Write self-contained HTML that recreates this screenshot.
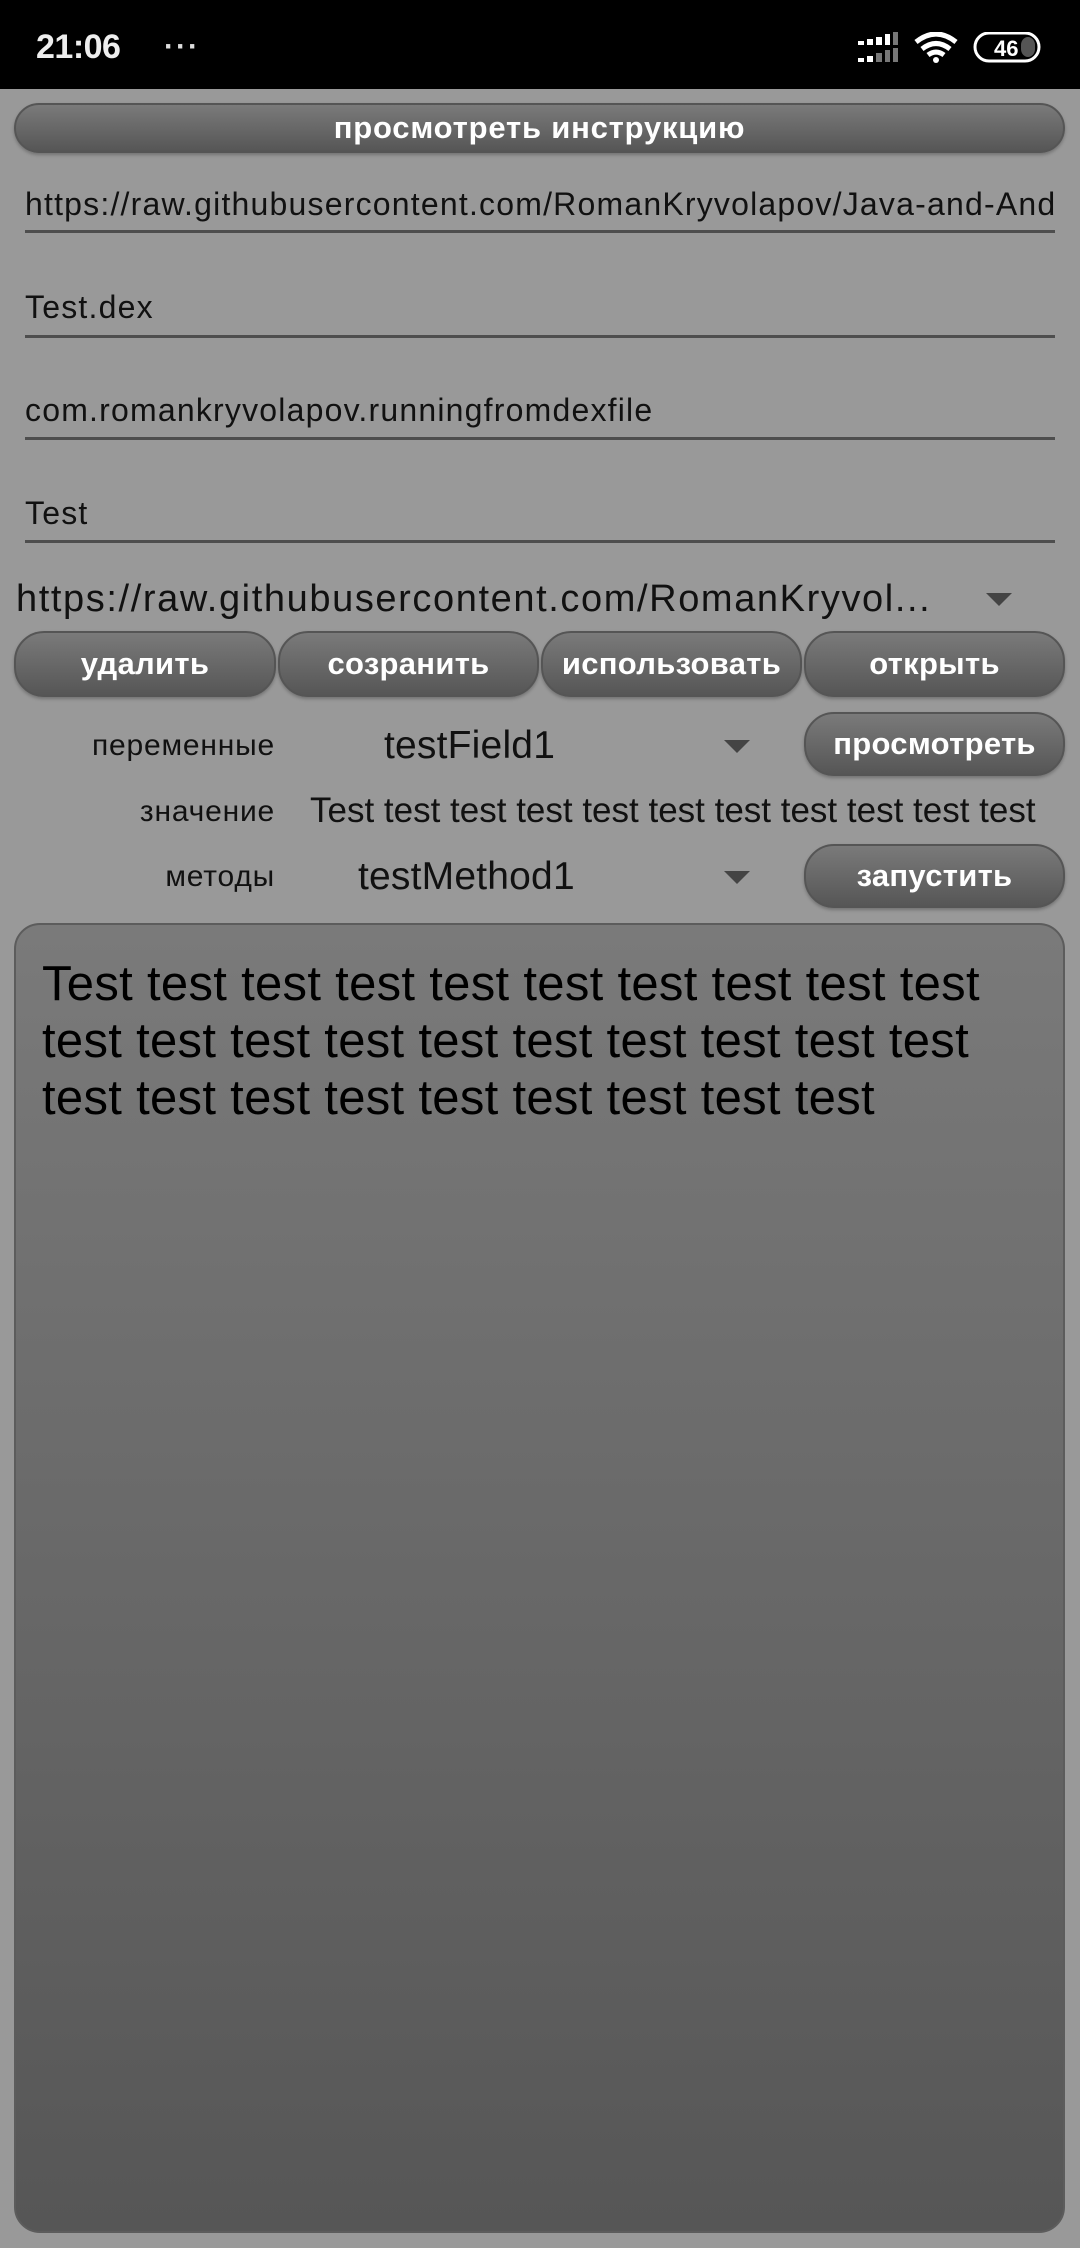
<!DOCTYPE html>
<html><head><meta charset="utf-8">
<style>
*{margin:0;padding:0;box-sizing:border-box}
body{width:1080px;height:2248px;background:#999;font-family:"Liberation Sans",sans-serif;position:relative;overflow:hidden}
.abs{position:absolute;white-space:nowrap}
.sb{left:0;top:0;width:1080px;height:89px;background:#000}
.btn{position:absolute;border:2px solid #555;background:linear-gradient(#7a7a7a,#565656);color:#fff;font-weight:bold;display:flex;align-items:center;justify-content:center;box-shadow:0 2px 3px rgba(0,0,0,.25);letter-spacing:0.3px}
.field{position:absolute;left:25px;width:1030px;font-size:32px;color:#111;overflow:hidden;white-space:nowrap;letter-spacing:1.2px}
.line{position:absolute;left:25px;width:1030px;height:3px;background:#4e4e4e}
.tri{position:absolute;width:0;height:0;border-left:13px solid transparent;border-right:13px solid transparent;border-top:13px solid #444}
.lbl{position:absolute;white-space:nowrap;right:805px;font-size:30px;color:#111;letter-spacing:0.8px}
</style></head><body>
<div class="abs sb"></div>
<div class="abs" style="left:36px;top:28px;color:#eee;font-size:34px;font-weight:bold;letter-spacing:-0.5px">21:06</div>
<div class="abs" style="left:164px;top:30px;color:#ddd;font-size:30px;font-weight:bold;letter-spacing:2px">···</div>
<svg class="abs" style="left:858px;top:32px" width="240" height="32" viewBox="0 0 240 32">
 <g fill="#fff"><rect x="0" y="9" width="6" height="4"/><rect x="9" y="7" width="6" height="6"/><rect x="18" y="5" width="6" height="8"/><rect x="27" y="2" width="5" height="11"/>
 <rect x="0" y="26" width="6" height="4"/><rect x="9" y="24" width="6" height="6"/></g>
 <g fill="#777"><rect x="35" y="0" width="5" height="13"/><rect x="18" y="21" width="6" height="9"/><rect x="27" y="18" width="5" height="12"/><rect x="35" y="16" width="5" height="14"/></g>
 <path d="M58 10 Q78 -6 98 10" stroke="#fff" stroke-width="5" fill="none"/>
 <path d="M64 17 Q78 6 92 17" stroke="#fff" stroke-width="5" fill="none"/>
 <path d="M70 23 Q78 17 86 23" stroke="#fff" stroke-width="5" fill="none"/>
 <circle cx="78" cy="28" r="3" fill="#fff"/>
 <rect x="117" y="1" width="64" height="28" rx="14" fill="none" stroke="#fff" stroke-width="3"/>
 <rect x="163" y="5" width="14" height="20" rx="8" fill="#555"/>
 <text x="136" y="24" fill="#fff" font-size="22" font-weight="bold" font-family="Liberation Sans">46</text>
</svg>

<div class="btn" style="left:14px;top:103px;width:1051px;height:50px;border-radius:25px;font-size:31px;letter-spacing:0.8px">просмотреть инструкцию</div>

<div class="field" style="top:186px">https://raw.githubusercontent.com/RomanKryvolapov/Java-and-Android</div>
<div class="line" style="top:230px"></div>
<div class="field" style="top:289px">Test.dex</div>
<div class="line" style="top:335px"></div>
<div class="field" style="top:392px">com.romankryvolapov.runningfromdexfile</div>
<div class="line" style="top:437px"></div>
<div class="field" style="top:495px">Test</div>
<div class="line" style="top:540px"></div>

<div class="abs" style="left:16px;top:578px;font-size:38px;color:#111;letter-spacing:1.6px;width:930px;overflow:hidden">https://raw.githubusercontent.com/RomanKryvol...</div>
<div class="tri" style="left:986px;top:593px"></div>

<div class="btn" style="left:14px;top:631px;width:262px;height:66px;border-radius:30px;font-size:31px">удалить</div>
<div class="btn" style="left:278px;top:631px;width:261px;height:66px;border-radius:30px;font-size:31px">созранить</div>
<div class="btn" style="left:541px;top:631px;width:261px;height:66px;border-radius:30px;font-size:31px">использовать</div>
<div class="btn" style="left:804px;top:631px;width:261px;height:66px;border-radius:30px;font-size:31px">открыть</div>

<div class="lbl" style="top:729px">переменные</div>
<div class="abs" style="left:384px;top:724px;font-size:39px;color:#111;letter-spacing:0.2px">testField1</div>
<div class="tri" style="left:724px;top:740px"></div>
<div class="btn" style="left:804px;top:712px;width:261px;height:64px;border-radius:30px;font-size:31px">просмотреть</div>

<div class="lbl" style="top:795px">значение</div>
<div class="abs" style="left:310px;top:791px;font-size:35px;color:#111;letter-spacing:0">Test test test test test test test test test test test</div>

<div class="lbl" style="top:860px">методы</div>
<div class="abs" style="left:358px;top:855px;font-size:39px;color:#111;letter-spacing:0.2px">testMethod1</div>
<div class="tri" style="left:724px;top:871px"></div>
<div class="btn" style="left:804px;top:844px;width:261px;height:64px;border-radius:30px;font-size:31px">запустить</div>

<div class="abs" style="left:14px;top:923px;width:1051px;height:1310px;border-radius:26px;border:2px solid #5c5c5c;background:linear-gradient(#7a7a7a,#565656)"></div>
<div class="abs" style="left:42px;top:956px;font-size:49px;line-height:57px;color:#000;white-space:normal;width:1010px;letter-spacing:0.3px">Test test test test test test test test test test<br>test test test test test test test test test test<br>test test test test test test test test test</div>
</body></html>
